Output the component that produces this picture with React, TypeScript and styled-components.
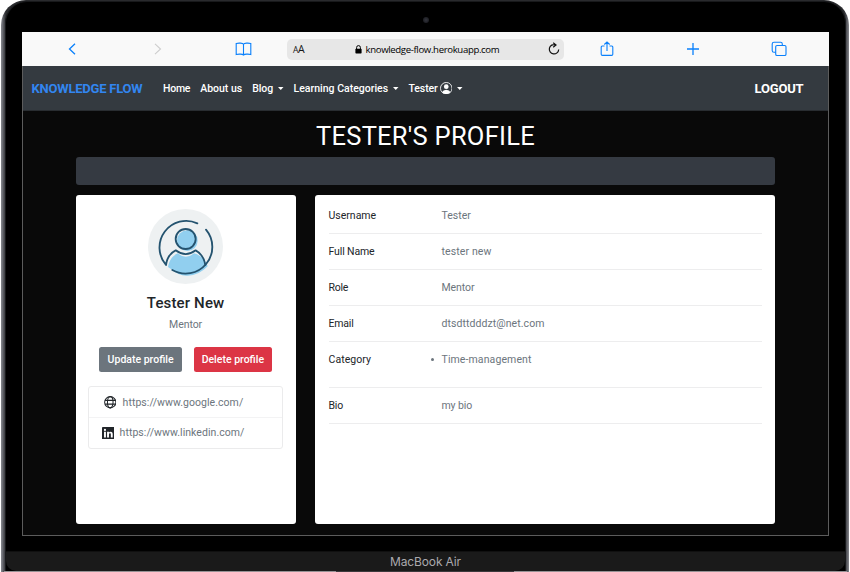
import React from 'react';
import styled, { createGlobalStyle } from 'styled-components';

const GlobalStyle = createGlobalStyle`
  * { box-sizing: border-box; }
  body { margin: 0; background: #fff; font-family: Roboto, sans-serif; overflow: hidden; }
`;

const Laptop = styled.div`
  width: 848px;
  height: 572px;
  margin-left: 1px;
  border-radius: 25px 25px 0 0;
  background: linear-gradient(90deg, #85868c, #777980 1px, #4b4c51 3px, #292a2d 5px, #292a2d 843px, #44454a 845px, #85868c 848px);
  padding: 1px 3px 0 4px;
  display: flex;
  flex-direction: column;
`;

const Bezel = styled.div`
  height: 571px;
  border-radius: 22px 22px 0 0;
  background: #000;
  border: 1px solid #18191b;
  border-bottom: 0;
  display: flex;
  flex-direction: column;
`;

const CameraBar = styled.div`
  height: 30px;
  flex: none;
  display: flex;
  justify-content: center;
  padding-top: 15px;
`;

const Camera = styled.div`
  width: 6px;
  height: 6px;
  border-radius: 50%;
  background: radial-gradient(#32343c, #141418);
`;

const Screen = styled.div`
  width: 807px;
  height: 504px;
  margin-left: 16px;
  flex: none;
  background: #090909;
  display: flex;
  flex-direction: column;
`;

const Chin = styled.div`
  height: 20px;
  margin-top: 15px;
  background: #1a1a1a;
  border-top: 1px solid #101010;
  border-radius: 0 0 10px 10px;
  color: #aaa9ad;
  font: 400 12px/20px Inter, sans-serif;
  letter-spacing: -0.13px;
  text-align: center;
`;

const Foot = styled.div`
  height: 1px;
  margin: 0 -2px;
  background: linear-gradient(90deg, #969295 332px, #3c3a3d 332px, #3c3a3d 510px, #969295 510px);
`;

const BrowserBar = styled.div`
  height: 34px;
  flex: none;
  background: #f9f9f9;
  display: flex;
  align-items: center;
  color: #0a80fb;
`;

const BarIcon = styled.svg<{ $w: number; $h: number; $left: number }>`
  width: ${p => p.$w}px;
  height: ${p => p.$h}px;
  margin-left: ${p => p.$left}px;
  flex: none;
  fill: none;
  stroke: currentColor;
  stroke-width: 1.1;
`;

const AddressField = styled.div`
  width: 277px;
  height: 21px;
  margin-left: 35px;
  flex: none;
  border-radius: 5px;
  background: #e7e7e7;
  color: #161616;
  display: flex;
  align-items: center;
  font: 400 9.6px/21px "Open Sans", sans-serif;
`;

const TextSize = styled.span`
  width: 67.5px;
  padding-left: 6px;
  letter-spacing: -0.5px;
  font-size: 10.5px;
  small { font-size: 8.5px; }
`;

const Address = styled.span`
  width: 186px;
  padding-left: 4px;
  letter-spacing: -0.35px;
  white-space: nowrap;
  color: #000;
`;

const Site = styled.div`
  flex: 1;
  border: 1px solid #5c5c5c;
  border-top: 0;
  display: flex;
  flex-direction: column;
`;

const Navbar = styled.nav`
  height: 45px;
  flex: none;
  background: #343a40;
  border-bottom: 1px solid #292d31;
  display: flex;
  align-items: center;
  padding: 0 24.5px 0 8.5px;
  color: #fff;
  white-space: nowrap;
`;

const Brand = styled.span`
  width: 131.5px;
  font-size: 13px;
  font-weight: 700;
  letter-spacing: -0.22px;
  color: #3286f0;
`;

const NavLinks = styled.div`
  display: flex;
  gap: 10px;
  flex: 1;
`;

const NavLink = styled.span<{ $spacing?: number }>`
  display: flex;
  align-items: center;
  font-size: 10.5px;
  font-weight: 500;
  letter-spacing: ${p => p.$spacing ?? 0}px;
`;

const CaretShape = styled.svg`
  width: 5.5px;
  height: 3px;
  margin-left: 5px;
  fill: currentColor;
`;

const UserIcon = styled.svg`
  width: 12.5px;
  height: 12.5px;
  margin-left: 2px;
  fill: currentColor;
`;

const Logout = styled.span`
  font-size: 13px;
  font-weight: 700;
  letter-spacing: -0.17px;
`;

const Title = styled.h1`
  height: 46px;
  flex: none;
  margin: 0;
  padding-top: 4px;
  color: #fff;
  font-size: 25.5px;
  line-height: 42px;
  font-weight: 400;
  letter-spacing: 0.26px;
  text-align: center;
`;

const Content = styled.main`
  width: 699px;
  margin-left: 53px;
  display: flex;
  flex-direction: column;
  gap: 10.4px;
`;

const Breadcrumb = styled.div`
  height: 28px;
  border-radius: 3px;
  background: #353a42;
`;

const Columns = styled.div`
  display: grid;
  grid-template-columns: 220px 460px;
  gap: 19px;
  height: 328.6px;
`;

const Card = styled.section`
  background: #fff;
  border-radius: 3px;
  color: #212529;
`;

const ProfileCard = styled(Card)`
  display: flex;
  flex-direction: column;
  align-items: center;
  padding: 13.2px 0.8px 0 0;
`;

const Avatar = styled.svg`
  width: 75px;
  height: 75px;
  flex: none;
`;

const ProfileName = styled.h2`
  margin: 9px 0 0;
  font-size: 15px;
  line-height: 21px;
  font-weight: 500;
  letter-spacing: 0.14px;
`;

const ProfileRole = styled.p`
  margin: 3px 0 0;
  color: #6c757d;
  font-size: 10.5px;
  line-height: 16px;
  letter-spacing: -0.07px;
`;

const Actions = styled.div`
  display: flex;
  gap: 12px;
  margin-top: 14.5px;
`;

const Button = styled.button<{ $color: string; $width: number }>`
  width: ${p => p.$width}px;
  height: 24.5px;
  padding: 0;
  border: 0;
  border-radius: 2.5px;
  background: ${p => p.$color};
  color: #fff;
  font: 500 10.5px Roboto, sans-serif;
`;

const Links = styled.div`
  width: 195px;
  margin-top: 14px;
  border: 1px solid #ebebec;
  border-radius: 3px;
`;

const LinkRow = styled.div<{ $inset: number; $gap: number }>`
  height: 30.5px;
  display: flex;
  align-items: center;
  gap: ${p => p.$gap}px;
  padding-left: ${p => p.$inset}px;
  color: #6c757d;
  font-size: 10.5px;
  letter-spacing: 0.05px;
  &:first-child { padding-top: 1px; }
  & + & { border-top: 1px solid #f3f3f4; }
  svg { color: #212529; flex: none; }
`;

const DetailsCard = styled(Card)`
  padding: 2.6px 13.5px 0 13.5px;
`;

const Row = styled.div<{ $height?: number }>`
  display: grid;
  grid-template-columns: 113px 1fr;
  height: ${p => p.$height ?? 36}px;
  border-bottom: 1px solid #ededee;
  font-size: 10.5px;
  line-height: 35px;
`;

const Label = styled.span<{ $spacing: number }>`
  letter-spacing: ${p => p.$spacing}px;
`;

const Value = styled.span<{ $spacing: number; $bullet?: boolean }>`
  color: #6c757d;
  letter-spacing: ${p => p.$spacing}px;
  display: flex;
  align-items: center;
  height: 35px;
  &::before {
    content: '';
    display: ${p => (p.$bullet ? 'block' : 'none')};
    width: 3.5px;
    height: 3.5px;
    margin: 0 7.5px 0 -11px;
    border-radius: 50%;
    background: #6c757d;
  }
`;

type Detail = { label: string; value: string; ls: number; vs: number; height?: number; bullet?: boolean };

const details: Detail[] = [
  { label: 'Username', value: 'Tester', ls: 0, vs: 0 },
  { label: 'Full Name', value: 'tester new', ls: -0.13, vs: 0.12 },
  { label: 'Role', value: 'Mentor', ls: -0.25, vs: -0.07 },
  { label: 'Email', value: 'dtsdttdddzt@net.com', ls: -0.2, vs: 0.07 },
  { label: 'Category', value: 'Time-management', ls: 0.06, vs: 0.11, height: 46, bullet: true },
  { label: 'Bio', value: 'my bio', ls: -0.19, vs: -0.12 },
];

const Caret = () => <CaretShape viewBox="0 0 5.5 3"><path d="M0 0h5.5L2.75 3z" /></CaretShape>;

const AvatarArt = () => (
  <Avatar viewBox="0 0 225 225" fill="none">
    <circle cx="112.5" cy="112.5" r="112.5" fill="#eef1f2" />
    <circle cx="118" cy="95" r="31" fill="#91cfef" />
    <path d="M60 174C64 152 76 138 90 133Q113 154 138 133C158 138 174 154 179 172Q150 202 115 200Q90 198 72 182Z" fill="#91cfef" />
    <g stroke="#24536f" strokeWidth="5.5" strokeLinecap="round" strokeLinejoin="round">
      <path d="M148 43A80 80 0 0 0 54 168C57 147 68 131 83 124Q113 147 143 124C160 133 169 150 172 168" />
      <path d="M174 62A80 80 0 0 1 73 183" />
      <circle cx="113" cy="90" r="30" />
    </g>
  </Avatar>
);

export default function App() {
  return (
    <>
      <GlobalStyle />
      <Laptop>
        <Bezel>
          <CameraBar><Camera /></CameraBar>
          <Screen>
            <BrowserBar>
              <BarIcon $w={8} $h={12} $left={45.5} viewBox="0 0 8 12"><path d="M7 .8 1.5 6 7 11.2" strokeWidth="1.3" /></BarIcon>
              <BarIcon $w={8} $h={12} $left={78} viewBox="0 0 8 12" color="#cdcdcd"><path d="m1 .8 5.5 5.2L1 11.2" /></BarIcon>
              <BarIcon $w={17} $h={14} $left={73.5} viewBox="0 0 17 14">
                <path d="M8.5 2.3C7.8 1 3.5.8 1.2 1.5v11C3.5 11.8 7.5 12 8.5 13c1-1 5-1.2 7.3-.5v-11C13.5.8 9.2 1 8.5 2.3V13" />
              </BarIcon>
              <AddressField>
                <TextSize><small>A</small>A</TextSize>
                <svg width="7" height="9" viewBox="0 0 7 9">
                  <rect x=".4" y="3.7" width="6.2" height="4.8" rx=".7" fill="#000" />
                  <path d="M1.6 4V2.5a1.9 1.9 0 0 1 3.8 0V4" fill="none" stroke="#000" />
                </svg>
                <Address>knowledge-flow.herokuapp.com</Address>
                <svg width="12" height="14" viewBox="0 0 12 14" fill="none" stroke="#111" strokeWidth="1.2">
                  <path d="M7.5 2.8A4.7 4.7 0 1 0 10.7 7.5M5.2.7 8 2.9 5.2 5.2" />
                </svg>
              </AddressField>
              <BarIcon $w={14} $h={16} $left={36} viewBox="0 0 14 16">
                <path d="M4.5 5H2.2Q1.2 5 1.2 6v7.2q0 1.2 1.2 1.2h9.2q1.2 0 1.2-1.2V6q0-1-1-1H9.5M7 10V1M4.3 3.5 7 1l2.7 2.5" />
              </BarIcon>
              <BarIcon $w={12} $h={12} $left={72.5} viewBox="0 0 12 12"><path d="M6 0v12M0 6h12" strokeWidth="1.3" /></BarIcon>
              <BarIcon $w={16} $h={16} $left={72} viewBox="0 0 16 16">
                <rect x="4.7" y="4.5" width="10.3" height="10" rx="1.3" />
                <path d="M4.7 11.3H3Q1.2 11.3 1.2 9.5V3Q1.2 1.3 3 1.3h6.6q1.7 0 1.7 1.7v1.5" />
              </BarIcon>
            </BrowserBar>
            <Site>
              <Navbar>
                <Brand>KNOWLEDGE FLOW</Brand>
                <NavLinks>
                  <NavLink $spacing={-0.25}>Home</NavLink>
                  <NavLink>About us</NavLink>
                  <NavLink $spacing={-0.1}>Blog<Caret /></NavLink>
                  <NavLink>Learning Categories<Caret /></NavLink>
                  <NavLink $spacing={-0.13}>
                    Tester
                    <UserIcon viewBox="0 0 16 16">
                      <circle cx="8" cy="8" r="7.4" fill="none" stroke="currentColor" strokeWidth="1.1" />
                      <circle cx="8" cy="6" r="3" />
                      <path d="M2.5 13.2Q4 10 8 10t5.5 3.2Q11 15.5 8 15.5t-5.5-2.3" />
                    </UserIcon>
                    <Caret />
                  </NavLink>
                </NavLinks>
                <Logout>LOGOUT</Logout>
              </Navbar>
              <Title>TESTER'S PROFILE</Title>
              <Content>
                <Breadcrumb />
                <Columns>
                  <ProfileCard>
                    <AvatarArt />
                    <ProfileName>Tester New</ProfileName>
                    <ProfileRole>Mentor</ProfileRole>
                    <Actions>
                      <Button $color="#6c757d" $width={82.5}>Update profile</Button>
                      <Button $color="#dc3545" $width={78}>Delete profile</Button>
                    </Actions>
                    <Links>
                      <LinkRow $inset={14.5} $gap={6.5}>
                        <svg width="12.5" height="12.5" viewBox="0 0 16 16" fill="none" stroke="currentColor" strokeWidth="1.3">
                          <circle cx="8" cy="8" r="7.2" />
                          <ellipse cx="8" cy="8" rx="3.6" ry="7.2" />
                          <path d="M1.4 5.6h13.2M1.4 10.4h13.2" />
                        </svg>
                        https://www.google.com/
                      </LinkRow>
                      <LinkRow $inset={12.5} $gap={5.5}>
                        <svg width="12.5" height="12.5" viewBox="0 0 16 16" fill="currentColor">
                          <rect width="16" height="16" rx="1.1" />
                          <path d="M2.6 6.2H5v7.2H2.6zM2.4 3.8a1.4 1.4 0 1 1 2.8 0 1.4 1.4 0 0 1-2.8 0M6.5 6.2h2.4v1c.4-.7 1.1-1.2 2.2-1.2 2.1 0 2.6 1.4 2.6 3.3v4.1h-2.4V9.8c0-1-.1-1.8-1.1-1.8s-1.3.8-1.3 1.8v3.6H6.5z" fill="#fff" />
                        </svg>
                        https://www.linkedin.com/
                      </LinkRow>
                    </Links>
                  </ProfileCard>
                  <DetailsCard>
                    {details.map(d => (
                      <Row key={d.label} $height={d.height}>
                        <Label $spacing={d.ls}>{d.label}</Label>
                        <Value $spacing={d.vs} $bullet={d.bullet}>{d.value}</Value>
                      </Row>
                    ))}
                  </DetailsCard>
                </Columns>
              </Content>
            </Site>
          </Screen>
          <Chin>MacBook Air</Chin>
          <Foot />
        </Bezel>
      </Laptop>
    </>
  );
}
